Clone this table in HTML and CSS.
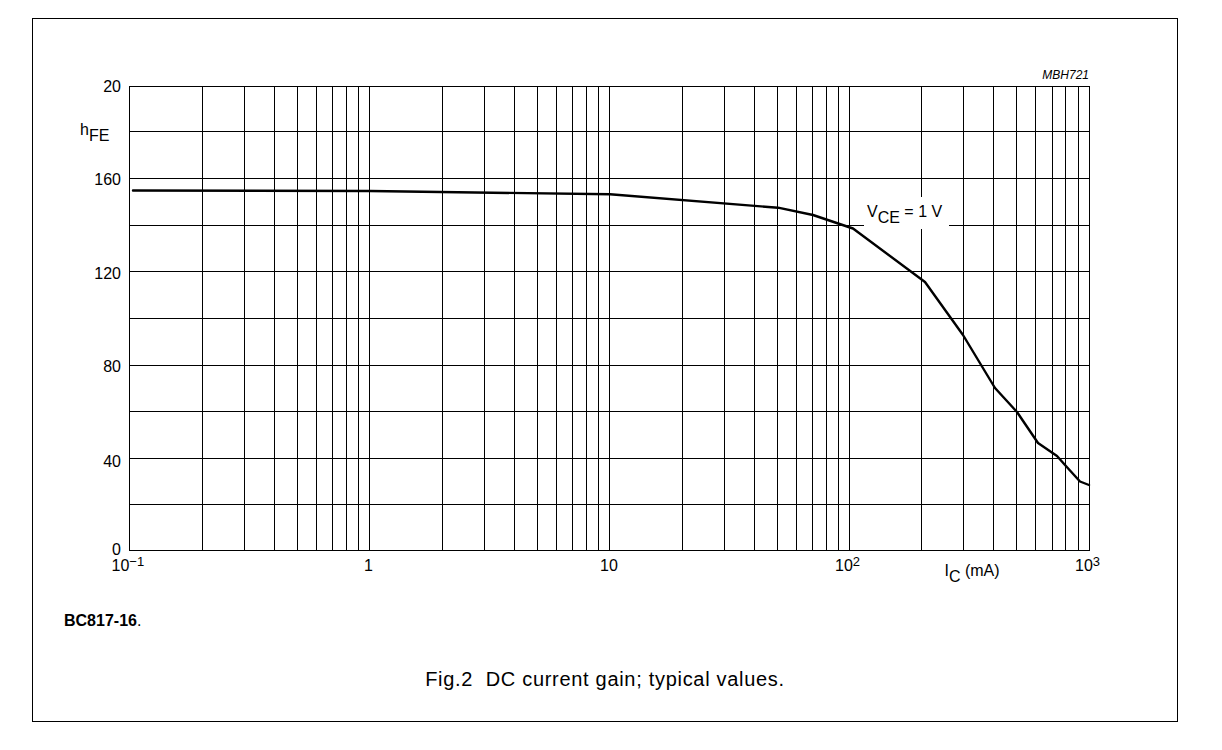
FILE: index.html
```html
<!DOCTYPE html>
<html lang="en">
<head>
<meta charset="utf-8">
<title>Fig.2 DC current gain; typical values.</title>
<link rel="stylesheet" href="styles.css">
</head>
<body>
<div class="sheet">
  <svg class="chart" width="1144" height="575" viewBox="33 19 1144 575" xmlns="http://www.w3.org/2000/svg">
    <text class="code" x="1089" y="79">MBH721</text>
    <rect class="grid" x="129.5" y="86.5" width="960" height="464"/>
    <path class="grid" d="M202.5 86.5V550.5M244.5 86.5V550.5M274.5 86.5V550.5M297.5 86.5V550.5M316.5 86.5V550.5M332.5 86.5V550.5M346.5 86.5V550.5M358.5 86.5V550.5M369.5 86.5V550.5
      M442.5 86.5V550.5M484.5 86.5V550.5M514.5 86.5V550.5M537.5 86.5V550.5M556.5 86.5V550.5M572.5 86.5V550.5M586.5 86.5V550.5M598.5 86.5V550.5M609.5 86.5V550.5
      M682.5 86.5V550.5M724.5 86.5V550.5M754.5 86.5V550.5M777.5 86.5V550.5M796.5 86.5V550.5M812.5 86.5V550.5M826.5 86.5V550.5M838.5 86.5V550.5M849.5 86.5V550.5
      M921.5 86.5V550.5M963.5 86.5V550.5M993.5 86.5V550.5M1016.5 86.5V550.5M1035.5 86.5V550.5M1052.5 86.5V550.5M1065.5 86.5V550.5M1078.5 86.5V550.5
      M129.5 131.5H1089.5M129.5 178.5H1089.5M129.5 225.5H1089.5M129.5 271.5H1089.5M129.5 318.5H1089.5M129.5 365.5H1089.5M129.5 411.5H1089.5M129.5 458.5H1089.5M129.5 504.5H1089.5"/>
    <rect class="mask" x="864" y="197" width="85" height="32"/>
    <polyline class="curve" points="133,190.5 370,191 610,194.3 778,207.7 813,215 853,228.5 925,282 963,335 995,388 1017,412 1038,443 1057,456 1065,465 1080,481.5 1089,485"/>

    <text class="lbl" x="867" y="217">V<tspan dy="6">CE</tspan><tspan dy="-6"> = 1 V</tspan></text>

    <text class="lbl end" x="121" y="92">20</text>
    <text class="lbl" x="80" y="135">h<tspan dy="6">FE</tspan></text>
    <text class="lbl end" x="121" y="185">160</text>
    <text class="lbl end" x="121" y="279">120</text>
    <text class="lbl end" x="121" y="372">80</text>
    <text class="lbl end" x="121" y="467">40</text>
    <text class="lbl end" x="121" y="555">0</text>

    <text class="lbl" x="111.5" y="571">10<tspan class="sup" dy="-5.5">−1</tspan></text>
    <text class="lbl mid" x="368.5" y="571">1</text>
    <text class="lbl mid" x="609" y="571">10</text>
    <text class="lbl" x="835" y="571">10<tspan class="sup" dy="-5.5">2</tspan></text>
    <text class="lbl" x="944.5" y="575.5">I<tspan dy="6">C</tspan><tspan dy="-6"> (mA)</tspan></text>
    <text class="lbl" x="1075" y="571">10<tspan class="sup" dy="-5.5">3</tspan></text>
  </svg>
  <p class="part"><b>BC817-16</b>.</p>
  <p class="caption">Fig.2&nbsp;&nbsp;DC current gain; typical values.</p>
</div>
</body>
</html>
```

FILE: styles.css
```css
html, body {
  margin: 0;
  padding: 0;
  background: #fff;
}

body {
  font-family: "Liberation Sans", Arial, sans-serif;
  color: #000;
}

.sheet {
  margin: 18px 0 0 32px;
  width: 1144px;
  height: 702px;
  border: 1px solid #000;
}

.chart {
  display: block;
}

.grid {
  fill: none;
  stroke: #000;
  stroke-width: 1;
  shape-rendering: crispEdges;
}

.mask {
  fill: #fff;
  stroke: none;
}

.curve {
  fill: none;
  stroke: #000;
  stroke-width: 2.4;
  stroke-linejoin: round;
  stroke-linecap: round;
}

.lbl {
  font-family: "Liberation Sans", Arial, sans-serif;
  font-size: 16px;
  fill: #000;
}

.lbl.end {
  text-anchor: end;
}

.lbl.mid {
  text-anchor: middle;
}

.sup {
  font-size: 13px;
}

.code {
  font-family: "Liberation Sans", Arial, sans-serif;
  font-size: 12px;
  font-style: italic;
  text-anchor: end;
  fill: #000;
}

.part {
  margin: 18px 0 0 31px;
  font-size: 16px;
  line-height: 18px;
}

.part b {
  font-weight: bold;
}

.caption {
  margin: 38px 0 0;
  text-align: center;
  font-size: 20px;
  line-height: 23px;
  letter-spacing: 0.7px;
}
```
